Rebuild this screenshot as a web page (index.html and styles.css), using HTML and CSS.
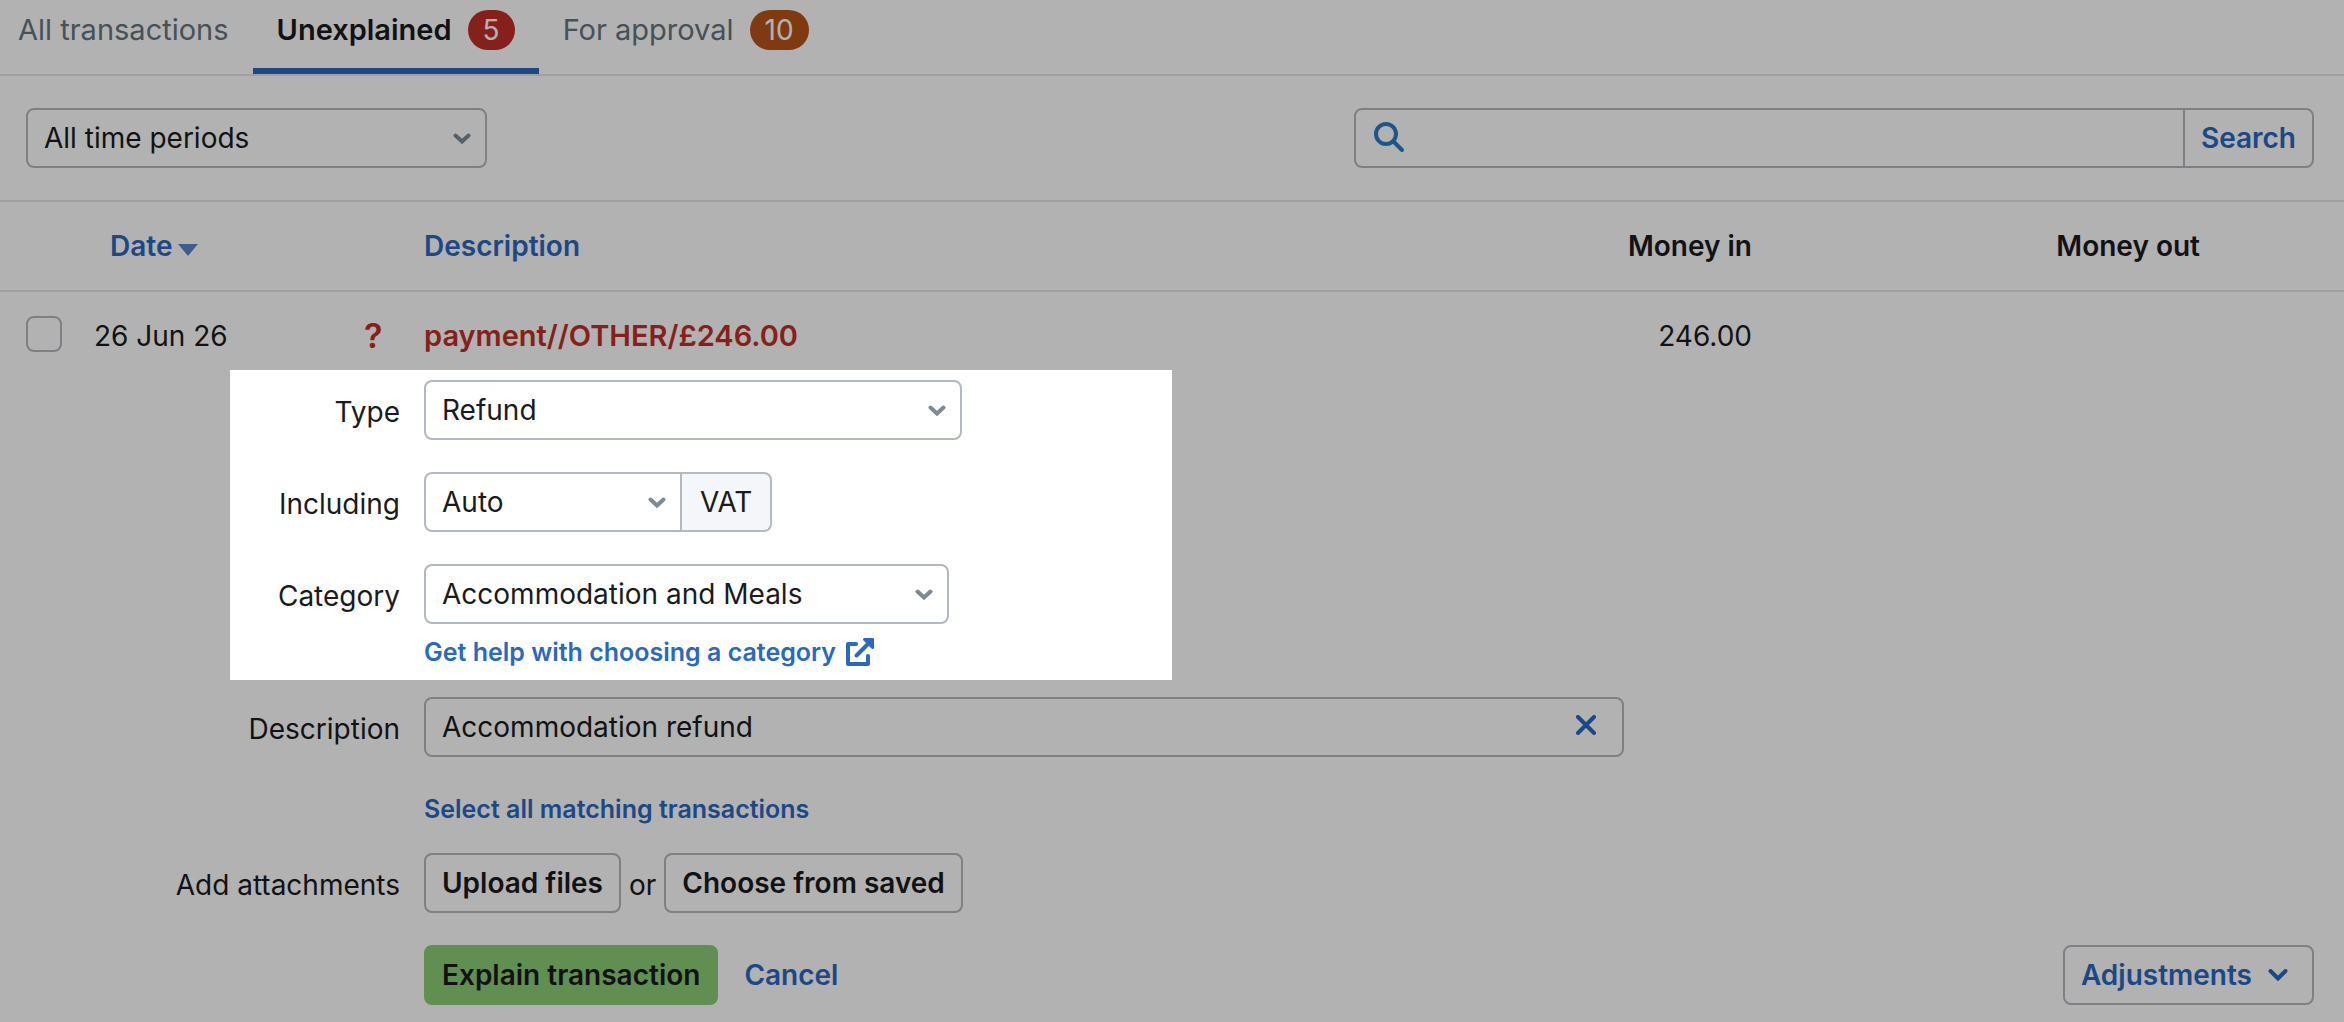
FILE: index.html
```html
<!DOCTYPE html>
<html lang="en">
<head>
  <meta charset="UTF-8">
  <meta name="viewport" content="width=device-width, initial-scale=1">
  <title>Bank transactions</title>
  <link rel="stylesheet" href="styles.css">
</head>
<body>
  <nav class="tabs">
    <a href="#all" class="tab">All transactions</a>
    <a href="#unexplained" class="tab active">Unexplained <span class="badge red">5</span></a>
    <a href="#approval" class="tab">For approval <span class="badge orange">10</span></a>
  </nav>

  <div class="toolbar">
    <div class="select-wrap period">
      <select class="control" aria-label="Time period">
        <option>All time periods</option>
      </select>
      <svg class="chevron" viewBox="0 0 18 12"><path d="M2.5 2.5L9 8.5L15.5 2.5"/></svg>
    </div>
    <form class="search">
      <svg class="search-icon" viewBox="0 0 32 32"><circle cx="13" cy="12" r="10"/><path d="M20.500 19.500L29 28"/></svg>
      <input type="search" aria-label="Search transactions">
      <button type="submit">Search</button>
    </form>
  </div>

  <table class="transactions">
    <colgroup>
      <col class="col-check">
      <col class="col-date">
      <col class="col-status">
      <col>
      <col class="col-in">
      <col class="col-out">
    </colgroup>
    <thead>
      <tr>
        <th></th>
        <th class="date-head"><a href="#date">Date<svg class="sort" viewBox="0 0 20 12"><path d="M0 0H20L10 12Z"/></svg></a></th>
        <th></th>
        <th><a href="#description">Description</a></th>
        <th class="money">Money in</th>
        <th class="money money-out">Money out</th>
      </tr>
    </thead>
    <tbody>
      <tr>
        <td><input type="checkbox" class="check" aria-label="Select transaction"></td>
        <td>26 Jun 26</td>
        <td class="unknown">?</td>
        <td><a href="#payment" class="payment">payment//OTHER/£246.00</a></td>
        <td class="money">246.00</td>
        <td class="money money-out"></td>
      </tr>
    </tbody>
  </table>

  <form class="explain">
    <!-- highlighted step, everything around it is dimmed -->
    <div class="spotlight">
      <div class="row">
        <label for="type">Type</label>
        <div class="select-wrap type">
          <select id="type" class="control">
            <option>Refund</option>
          </select>
          <svg class="chevron" viewBox="0 0 18 12"><path d="M2.5 2.5L9 8.5L15.5 2.5"/></svg>
        </div>
      </div>
      <div class="row">
        <label for="vat">Including</label>
        <div class="select-wrap vat">
          <select id="vat" class="control">
            <option>Auto</option>
          </select>
          <svg class="chevron" viewBox="0 0 18 12"><path d="M2.5 2.5L9 8.5L15.5 2.5"/></svg>
        </div>
        <span class="addon">VAT</span>
      </div>
      <div class="row">
        <label for="category">Category</label>
        <div class="select-wrap category">
          <select id="category" class="control">
            <option>Accommodation and Meals</option>
          </select>
          <svg class="chevron" viewBox="0 0 18 12"><path d="M2.5 2.5L9 8.5L15.5 2.5"/></svg>
        </div>
      </div>
      <a href="#help" class="small-link help">Get help with choosing a category
        <svg class="external" viewBox="0 0 28 28"><path d="M10 6H2V26H22V18"/><path d="M10.500 17.500L24 4"/><path class="head" d="M18 0H27Q28 0 28 1V10Q28 11 26 11L17 2Q17 0 18 0Z"/></svg>
      </a>
    </div>

    <div class="row description">
      <label for="description">Description</label>
      <div class="clearable">
        <input type="text" id="description" class="control" value="Accommodation refund">
        <button type="button" class="clear" aria-label="Clear">
          <svg viewBox="0 0 20 20"><path d="M2 2L18 18M18 2L2 18"/></svg>
        </button>
      </div>
    </div>
    <a href="#matching" class="small-link matching">Select all matching transactions</a>

    <div class="row attachments">
      <label for="upload">Add attachments</label>
      <button type="button" id="upload" class="btn">Upload files</button>
      <span class="or">or</span>
      <button type="button" class="btn">Choose from saved</button>
    </div>

    <div class="actions">
      <button type="submit" class="btn primary">Explain transaction</button>
      <a href="#cancel" class="cancel">Cancel</a>
      <button type="button" class="btn adjustments">Adjustments
        <svg class="chevron-inline" viewBox="0 0 20 12"><path d="M2.500 2L10 9.500L17.500 2"/></svg>
      </button>
    </div>
  </form>
</body>
</html>
```

FILE: styles.css
```css
* {
  box-sizing: border-box;
}

body {
  margin: 0;
  min-height: 100vh;
  font-family: Inter, "Liberation Sans", sans-serif;
  font-size: 28px;
  line-height: 40px;
  color: #1a1b1d;
  background-color: #fff;
  overflow: hidden;
}

a {
  color: #2b68bf;
  text-decoration: none;
}

input, select, button {
  font: inherit;
  color: inherit;
}

button {
  cursor: pointer;
}

/* Tabs */
.tabs {
  display: flex;
  height: 76px;
  margin-left: -6px;
  border-bottom: 2px solid #e5e5eb;
  font-size: 29px;
}

.tab {
  display: flex;
  gap: 16px;
  padding: 10px 24px 18px;
  color: #65757f;
}

.tab.active {
  color: #1a1b1d;
  font-weight: 600;
  border-bottom: 6px solid #2b68bf;
}

.badge {
  height: 40px;
  padding: 0 15px;
  border-radius: 20px;
  color: #fff;
  font-size: 28px;
  font-weight: 400;
}

.red {
  background-color: #bf2f29;
}

.orange {
  background-color: #b7531b;
}

/* Toolbar */
.toolbar {
  display: flex;
  justify-content: space-between;
  padding: 32px 30px 32px 26px;
}

.control {
  width: 100%;
  height: 60px;
  padding: 0 16px;
  border: 2px solid #b3b9c0;
  border-radius: 8px;
  background-color: #fff;
  appearance: none;
}

.select-wrap {
  position: relative;
}

.chevron {
  position: absolute;
  top: 25px;
  right: 16px;
  width: 18px;
  height: 12px;
  pointer-events: none;
}

.chevron path {
  fill: none;
  stroke: #7d8a93;
  stroke-width: 4;
  stroke-linecap: round;
}

.period {
  width: 461px;
}

.search {
  display: flex;
  align-items: center;
  width: 960px;
  height: 60px;
  border: 2px solid #b3b9c0;
  border-radius: 8px;
}

.search-icon {
  width: 32px;
  height: 32px;
  margin-left: 17px;
  fill: none;
  stroke: #2a7bc7;
  stroke-width: 4;
  stroke-linecap: round;
}

.search input {
  flex: 1;
  min-width: 0;
  height: 100%;
  border: 0;
  background: none;
}

.search button {
  height: 100%;
  padding: 0 16px;
  border: 0;
  border-left: 2px solid #b3b9c0;
  background: none;
  color: #2b68bf;
  font-weight: 600;
}

/* Transactions */
.transactions {
  width: 100%;
  table-layout: fixed;
  border-collapse: collapse;
  border-top: 2px solid #e5e5eb;
}

.transactions th, .transactions td {
  padding: 0;
  text-align: left;
}

.transactions th {
  height: 90px;
  border-bottom: 2px solid #e5e5eb;
  font-weight: 600;
}

.transactions td {
  padding-top: 24px;
  vertical-align: top;
}

.col-check {
  width: 94px;
}

.col-date {
  width: 270px;
}

.col-status {
  width: 60px;
}

.col-in {
  width: 448px;
}

.col-out {
  width: 592px;
}

.transactions .date-head {
  padding-left: 16px;
}

.transactions .money {
  text-align: right;
}

.transactions .money-out {
  padding-right: 144px;
}

.sort {
  width: 20px;
  height: 12px;
  margin-left: 6px;
  fill: #5a86c9;
}

.check {
  display: block;
  width: 36px;
  height: 36px;
  margin: 0 0 0 26px;
  border: 2px solid #b3b9c0;
  border-radius: 8px;
  background-color: #fff;
  appearance: none;
}

.unknown, .payment {
  color: #bf2f29;
  font-weight: 600;
}

.unknown {
  font-size: 34px;
}

.payment {
  font-size: 29px;
}

/* Explain form */
.spotlight {
  position: relative;
  z-index: 1;
  width: 942px;
  height: 310px;
  margin: 14px 0 0 230px;
  padding-top: 10px;
  background-color: #fff;
  box-shadow: 0 0 0 4000px rgba(0, 0, 0, 0.3);
}

.row {
  display: flex;
  align-items: center;
}

.row label {
  width: 400px;
  margin-right: 24px;
  padding-top: 4px;
  text-align: right;
}

.spotlight .row {
  margin-bottom: 32px;
}

.spotlight .row label {
  width: 170px;
}

.type {
  width: 538px;
}

.vat {
  width: 258px;
}

.vat .control {
  border-radius: 8px 0 0 8px;
}

.addon {
  height: 60px;
  padding: 8px 18px;
  border: 2px solid #b3b9c0;
  border-left: 0;
  border-radius: 0 8px 8px 0;
  background-color: #f4f6f9;
}

.category {
  width: 525px;
}

.small-link {
  font-size: 25px;
  font-weight: 600;
}

.spotlight .row:last-of-type {
  margin-bottom: 8px;
}

.help {
  display: flex;
  align-items: center;
  gap: 10px;
  margin-left: 194px;
}

.external {
  width: 28px;
  height: 28px;
  fill: none;
  stroke: #2b68bf;
  stroke-width: 4;
  stroke-linecap: round;
  stroke-linejoin: round;
}

.external .head {
  fill: #2b68bf;
  stroke: none;
}

.description {
  margin-top: 17px;
}

.clearable {
  position: relative;
  width: 1200px;
}

.clear {
  position: absolute;
  top: 8px;
  right: 18px;
  width: 40px;
  height: 40px;
  padding: 10px;
  border: 0;
  background: none;
}

.clear svg {
  display: block;
  fill: none;
  stroke: #2b68bf;
  stroke-width: 4;
  stroke-linecap: round;
}

.matching {
  display: block;
  width: max-content;
  margin: 32px 0 24px 424px;
}

.btn {
  height: 60px;
  padding: 0 16px;
  border: 2px solid #b3b9c0;
  border-radius: 8px;
  background-color: #fff;
  font-weight: 600;
}

.or {
  padding: 4px 8px 0;
}

.actions {
  display: flex;
  align-items: center;
  gap: 26px;
  margin-top: 32px;
  padding: 0 30px 16px 424px;
}

.primary {
  border-color: #8bcc75;
  background-color: #8bcc75;
}

.cancel {
  font-weight: 600;
}

.adjustments {
  display: flex;
  align-items: center;
  gap: 16px;
  margin-left: auto;
  padding-right: 24px;
  color: #2b68bf;
}

.chevron-inline {
  width: 20px;
  height: 12px;
  fill: none;
  stroke: #2b68bf;
  stroke-width: 4;
  stroke-linecap: round;
}
```
